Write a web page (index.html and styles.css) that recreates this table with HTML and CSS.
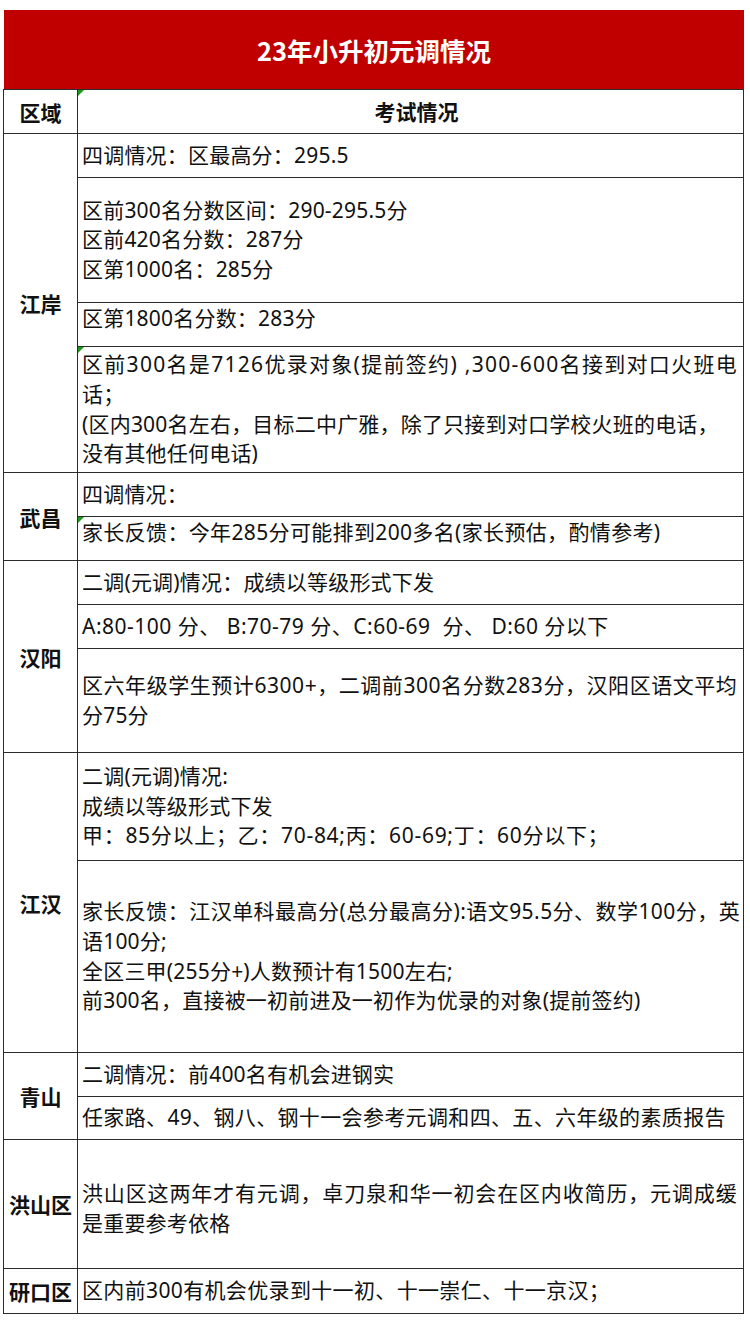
FILE: index.html
```html
<!DOCTYPE html>
<html lang="zh-CN">
<head>
<meta charset="utf-8">
<title>23年小升初元调情况</title>
<link rel="stylesheet" href="styles.css">
</head>
<body>
<div class="sheet">
  <div class="title">23年小升初元调情况</div>
  <div class="grid">
    <div class="row">
      <div class="label">区域</div>
      <div class="cells">
        <div class="cell h44 head mark">考试情况</div>
      </div>
    </div>

    <div class="row">
      <div class="label">江岸</div>
      <div class="cells">
        <div class="cell h44"><div class="ln">四调情况：区最高分：295.5</div></div>
        <div class="cell h125">
          <div class="ln">区前300名分数区间：290-295.5分</div>
          <div class="ln">区前420名分数：287分</div>
          <div class="ln">区第1000名：285分</div>
        </div>
        <div class="cell h44 up"><div class="ln">区第1800名分数：283分</div></div>
        <div class="cell h126 mark">
          <div class="ln sp">区前300名是7126优录对象(提前签约) ,300-600名接到对口火班电</div>
          <div class="ln">话；</div>
          <div class="ln">(区内300名左右，目标二中广雅，除了只接到对口学校火班的电话，</div>
          <div class="ln">没有其他任何电话)</div>
        </div>
      </div>
    </div>

    <div class="row">
      <div class="label">武昌</div>
      <div class="cells">
        <div class="cell h44"><div class="ln">四调情况：</div></div>
        <div class="cell h44 mark up"><div class="ln ls3">家长反馈：今年285分可能排到200多名(家长预估，酌情参考)</div></div>
      </div>
    </div>

    <div class="row">
      <div class="label">汉阳</div>
      <div class="cells">
        <div class="cell h44"><div class="ln">二调(元调)情况：成绩以等级形式下发</div></div>
        <div class="cell h44"><div class="ln ls5">A:80-100 分、 B:70-79 分、C:60-69&nbsp; 分、 D:60 分以下</div></div>
        <div class="cell h104">
          <div class="ln ls55">区六年级学生预计6300+，二调前300名分数283分，汉阳区语文平均</div>
          <div class="ln">分75分</div>
        </div>
      </div>
    </div>

    <div class="row">
      <div class="label">江汉</div>
      <div class="cells">
        <div class="cell h108">
          <div class="ln">二调(元调)情况:</div>
          <div class="ln">成绩以等级形式下发</div>
          <div class="ln ls7">甲：85分以上；乙：70-84;丙：60-69;丁：60分以下；</div>
        </div>
        <div class="cell h192">
          <div class="ln ls45">家长反馈：江汉单科最高分(总分最高分):语文95.5分、数学100分，英</div>
          <div class="ln">语100分;</div>
          <div class="ln">全区三甲(255分+)人数预计有1500左右;</div>
          <div class="ln">前300名，直接被一初前进及一初作为优录的对象(提前签约)</div>
        </div>
      </div>
    </div>

    <div class="row">
      <div class="label">青山</div>
      <div class="cells">
        <div class="cell h44"><div class="ln">二调情况：前400名有机会进钢实</div></div>
        <div class="cell h43"><div class="ln ls3">任家路、49、钢八、钢十一会参考元调和四、五、六年级的素质报告</div></div>
      </div>
    </div>

    <div class="row">
      <div class="label">洪山区</div>
      <div class="cells">
        <div class="cell h129 down">
          <div class="ln ls85">洪山区这两年才有元调，卓刀泉和华一初会在区内收简历，元调成缓</div>
          <div class="ln">是重要参考依格</div>
        </div>
      </div>
    </div>

    <div class="row">
      <div class="label">研口区</div>
      <div class="cells">
        <div class="cell h45"><div class="ln ls3">区内前300有机会优录到十一初、十一崇仁、十一京汉；</div></div>
      </div>
    </div>
  </div>
</div>
</body>
</html>
```
FILE: styles.css
```css
html, body {
  margin: 0;
  padding: 0;
  background: #ffffff;
}

body {
  font-family: "Noto Sans", "Noto Sans CJK SC", sans-serif;
  color: #111111;
}

.sheet {
  margin: 10px 0 0 3px;
  width: 741px;
}

.title {
  height: 79px;
  margin-left: 1px;
  background: #c00000;
  color: #ffffff;
  font-family: "Noto Sans CJK SC", sans-serif;
  font-weight: 700;
  font-size: 25.5px;
  display: flex;
  align-items: center;
  justify-content: center;
}

.grid {
  border-left: 1px solid #2b2b2b;
  border-top: 1px solid #2b2b2b;
}

.row {
  display: flex;
}

.label {
  box-sizing: border-box;
  width: 74px;
  flex: none;
  border-right: 1px solid #2b2b2b;
  border-bottom: 1px solid #2b2b2b;
  display: flex;
  align-items: center;
  justify-content: center;
  font-family: "Noto Sans CJK SC", sans-serif;
  font-weight: 700;
  font-size: 21px;
  white-space: nowrap;
}

.cells {
  flex: 1;
  min-width: 0;
  display: flex;
  flex-direction: column;
}

.cell {
  box-sizing: border-box;
  position: relative;
  overflow: hidden;
  border-right: 1px solid #2b2b2b;
  border-bottom: 1px solid #2b2b2b;
  display: flex;
  flex-direction: column;
  justify-content: center;
  padding-left: 4px;
  font-size: 21px;
  line-height: 29.6px;
  letter-spacing: 0.2px;
}

.cell.head {
  align-items: center;
  font-family: "Noto Sans CJK SC", sans-serif;
  font-weight: 700;
  padding-left: 12px;
  letter-spacing: 0;
}

.cell.up {
  padding-bottom: 11px;
}

.cell.down {
  padding-top: 9px;
}

.ln {
  white-space: nowrap;
}

.ln.sp { letter-spacing: 1.3px; }
.ln.ls3 { letter-spacing: 0.35px; }
.ln.ls45 { letter-spacing: 0.45px; }
.ln.ls5 { letter-spacing: 0.5px; }
.ln.ls55 { letter-spacing: 0.55px; }
.ln.ls7 { letter-spacing: 0.7px; }
.ln.ls85 { letter-spacing: 0.85px; }

.mark::before {
  content: "";
  position: absolute;
  left: 0;
  top: 0;
  border-top: 6px solid #1d9a1d;
  border-right: 6px solid transparent;
}

.h43 { height: 43px; }
.h44 { height: 44px; }
.h45 { height: 45px; }
.h104 { height: 104px; }
.h108 { height: 108px; }
.h125 { height: 125px; }
.h126 { height: 126px; }
.h129 { height: 129px; }
.h192 { height: 192px; }
```
